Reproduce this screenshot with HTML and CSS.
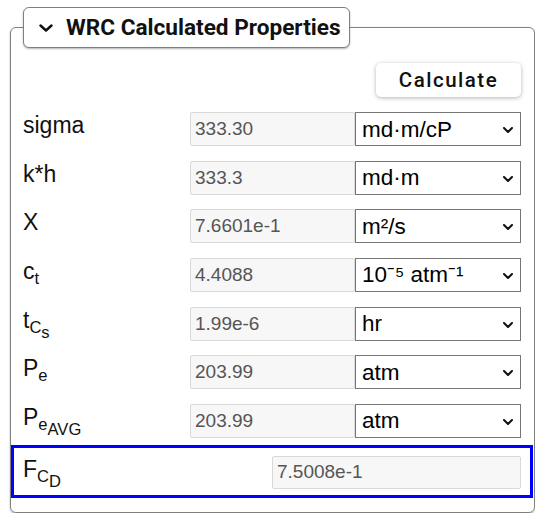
FILE: index.html
```html
<!DOCTYPE html>
<html lang="en">
<head>
<meta charset="utf-8">
<title>WRC Calculated Properties</title>
<link rel="stylesheet" href="styles.css">
</head>
<body>
<fieldset class="panel">
  <legend class="panel-legend">
    <svg class="legend-chevron" width="14" height="8" viewBox="0 0 14 8" aria-hidden="true"><path d="M1.5 1.5 L7 6.5 L12.5 1.5" fill="none" stroke="#111" stroke-width="2.4" stroke-linecap="round" stroke-linejoin="round"/></svg>
    <span>WRC Calculated Properties</span>
  </legend>

  <div class="actions">
    <button class="calc-btn" type="button">Calculate</button>
  </div>

  <div class="rows">
    <div class="row">
      <label class="label">sigma</label>
      <input class="value" type="text" readonly value="333.30">
      <div class="unit-wrap">
        <select class="unit"><option>md·m/cP</option></select>
        <svg class="unit-arrow" width="10" height="6" viewBox="0 0 10 6" aria-hidden="true"><path d="M1 1 L5 5 L9 1" fill="none" stroke="#111" stroke-width="2" stroke-linecap="round" stroke-linejoin="round"/></svg>
      </div>
    </div>
    <div class="row">
      <label class="label">k*h</label>
      <input class="value" type="text" readonly value="333.3">
      <div class="unit-wrap">
        <select class="unit"><option>md·m</option></select>
        <svg class="unit-arrow" width="10" height="6" viewBox="0 0 10 6" aria-hidden="true"><path d="M1 1 L5 5 L9 1" fill="none" stroke="#111" stroke-width="2" stroke-linecap="round" stroke-linejoin="round"/></svg>
      </div>
    </div>
    <div class="row">
      <label class="label">X</label>
      <input class="value" type="text" readonly value="7.6601e-1">
      <div class="unit-wrap">
        <select class="unit"><option>m²/s</option></select>
        <svg class="unit-arrow" width="10" height="6" viewBox="0 0 10 6" aria-hidden="true"><path d="M1 1 L5 5 L9 1" fill="none" stroke="#111" stroke-width="2" stroke-linecap="round" stroke-linejoin="round"/></svg>
      </div>
    </div>
    <div class="row">
      <label class="label">c<sub class="sub">t</sub></label>
      <input class="value" type="text" readonly value="4.4088">
      <div class="unit-wrap">
        <select class="unit"><option>10⁻⁵ atm⁻¹</option></select>
        <svg class="unit-arrow" width="10" height="6" viewBox="0 0 10 6" aria-hidden="true"><path d="M1 1 L5 5 L9 1" fill="none" stroke="#111" stroke-width="2" stroke-linecap="round" stroke-linejoin="round"/></svg>
      </div>
    </div>
    <div class="row">
      <label class="label">t<sub class="sub">C<sub class="sub2">s</sub></sub></label>
      <input class="value" type="text" readonly value="1.99e-6">
      <div class="unit-wrap">
        <select class="unit"><option>hr</option></select>
        <svg class="unit-arrow" width="10" height="6" viewBox="0 0 10 6" aria-hidden="true"><path d="M1 1 L5 5 L9 1" fill="none" stroke="#111" stroke-width="2" stroke-linecap="round" stroke-linejoin="round"/></svg>
      </div>
    </div>
    <div class="row">
      <label class="label">P<sub class="sub">e</sub></label>
      <input class="value" type="text" readonly value="203.99">
      <div class="unit-wrap">
        <select class="unit"><option>atm</option></select>
        <svg class="unit-arrow" width="10" height="6" viewBox="0 0 10 6" aria-hidden="true"><path d="M1 1 L5 5 L9 1" fill="none" stroke="#111" stroke-width="2" stroke-linecap="round" stroke-linejoin="round"/></svg>
      </div>
    </div>
    <div class="row">
      <label class="label">P<sub class="sub">e<sub class="sub2">AVG</sub></sub></label>
      <input class="value" type="text" readonly value="203.99">
      <div class="unit-wrap">
        <select class="unit"><option>atm</option></select>
        <svg class="unit-arrow" width="10" height="6" viewBox="0 0 10 6" aria-hidden="true"><path d="M1 1 L5 5 L9 1" fill="none" stroke="#111" stroke-width="2" stroke-linecap="round" stroke-linejoin="round"/></svg>
      </div>
    </div>
  </div>

  <div class="highlight">
    <label class="label">F<sub class="sub">C<sub class="sub2">D</sub></sub></label>
    <input class="value" type="text" readonly value="7.5008e-1">
  </div>
</fieldset>
</body>
</html>
```

FILE: styles.css
```css
html, body {
  background: #ffffff;
}

body {
  margin: 7px 8px 8px 8px;
  font-family: "Liberation Sans", Arial, sans-serif;
  color: #111;
}

.panel {
  margin: 0 0 0 2px;
  padding: 0 13px 14px 12px;
  border: 1px solid #808080;
  border-radius: 6px;
  box-shadow: 0 1px 2px rgba(0, 0, 0, 0.3);
  min-width: 0;
}

.panel-legend {
  display: flex;
  align-items: center;
  gap: 13px;
  padding: 6px 8px 6px 15px;
  border: 1px solid #808080;
  border-radius: 6px;
  box-shadow: 0 1px 2px rgba(0, 0, 0, 0.3);
  background: #fff;
  font-family: Roboto, "Liberation Sans", sans-serif;
  font-weight: 700;
  font-size: 22.6px;
  line-height: 27px;
  color: #111;
}

.legend-chevron {
  display: block;
  flex: none;
}

.actions {
  display: flex;
  justify-content: flex-end;
  margin-top: 15px;
}

.calc-btn {
  width: 145px;
  height: 34px;
  border: none;
  border-radius: 5px;
  background: #fff;
  box-shadow: 0 1px 4px rgba(0, 0, 0, 0.3);
  font-family: Roboto, "Liberation Sans", sans-serif;
  font-weight: 500;
  font-size: 20.5px;
  letter-spacing: 1.5px;
  color: #111;
  padding: 0;
}

.rows {
  display: flex;
  flex-direction: column;
  gap: 14.67px;
  margin-top: 15px;
}

.row {
  display: grid;
  grid-template-columns: 167px 165px 166px;
  height: 34px;
}

.label {
  align-self: start;
  padding-top: 2px;
  font-family: "Liberation Sans", Arial, sans-serif;
  font-size: 23px;
  line-height: 23px;
  color: #111;
  white-space: nowrap;
}

.sub {
  font-size: 0.72em;
  vertical-align: -0.32em;
  line-height: 0;
}

.sub2 {
  font-size: 1em;
  vertical-align: -0.3em;
  line-height: 0;
}

.value {
  box-sizing: border-box;
  width: 100%;
  height: 34px;
  margin: 0;
  padding: 0 4px;
  border: 1px solid #d9d9d9;
  border-radius: 2px;
  background: #f7f7f7;
  font-family: "Liberation Sans", Arial, sans-serif;
  font-size: 19px;
  color: #555;
  outline: none;
}

.unit-wrap {
  position: relative;
  height: 34px;
}

.unit {
  appearance: none;
  -webkit-appearance: none;
  box-sizing: border-box;
  width: 100%;
  height: 34px;
  margin: 0;
  padding: 0 26px 0 6px;
  border: 1px solid #767676;
  border-radius: 0;
  background: #fff;
  font-family: "Liberation Sans", Arial, sans-serif;
  font-size: 22.5px;
  color: #000;
}

.unit-arrow {
  position: absolute;
  right: 8px;
  top: 15px;
  pointer-events: none;
}

.highlight {
  display: grid;
  grid-template-columns: 1fr 249px;
  margin: 7px -12px 0 -12px;
  padding: 8px 9px 6px 9px;
  border: 3px solid #0000ff;
}

.highlight .value {
  height: 33px;
}
```
